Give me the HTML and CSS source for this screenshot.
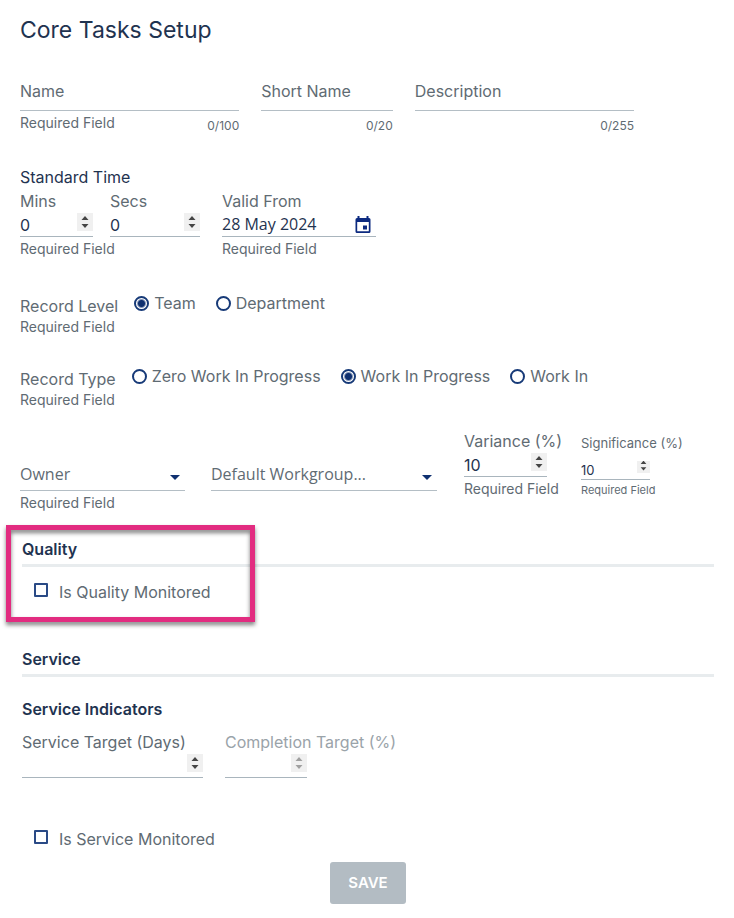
FILE: index.html
```
<!DOCTYPE html>
<html lang="en">
<head>
    <meta charset="UTF-8">
    <meta name="viewport" content="width=device-width, initial-scale=1.0">
    <title>Core Tasks Setup</title>
    <link rel="stylesheet" href="styles.css">
</head>
<body>

<form class="setup">
    <h1>Core Tasks Setup</h1>

    <div class="names">
        <div class="field">
            <input class="text" type="text" placeholder="Name" aria-label="Name" maxlength="100">
            <div class="hints"><span class="hint">Required Field</span><span class="count">0/100</span></div>
        </div>
        <div class="field">
            <input class="text" type="text" placeholder="Short Name" aria-label="Short Name" maxlength="20">
            <div class="hints"><span class="count">0/20</span></div>
        </div>
        <div class="field">
            <input class="text" type="text" placeholder="Description" aria-label="Description" maxlength="255">
            <div class="hints"><span class="count">0/255</span></div>
        </div>
    </div>

    <div class="times">
        <div>
            <h2>Standard Time</h2>
            <div class="pair">
                <div class="field mins">
                    <label for="mins">Mins</label>
                    <input id="mins" type="number" value="0">
                    <span class="hint">Required Field</span>
                </div>
                <div class="field secs">
                    <label for="secs">Secs</label>
                    <input id="secs" type="number" value="0">
                </div>
            </div>
        </div>
        <div class="field date">
            <label for="valid">Valid From</label>
            <div class="date-box">
                <input id="valid" type="text" value="28 May 2024">
                <button type="button" aria-label="Open calendar">
                    <svg width="16" height="18" viewBox="0 0 16 18">
                        <path fill="#0c2a80" fill-rule="evenodd" d="M2.500 0h2v2h7V0h2v2H14a1.500 1.500 0 0 1 1.500 1.500v12A1.500 1.500 0 0 1 14 17H2a1.500 1.500 0 0 1-1.500-1.500v-12A1.500 1.500 0 0 1 2 2h.5zM2.200 6v9.300h11.600V6zM8 9.500h4v4H8z"/>
                    </svg>
                </button>
            </div>
            <span class="hint">Required Field</span>
        </div>
    </div>

    <div class="choice level" role="radiogroup" aria-labelledby="level">
        <div>
            <div class="choice-name" id="level">Record Level</div>
            <span class="hint">Required Field</span>
        </div>
        <label class="option"><input type="radio" name="level" checked>Team</label>
        <label class="option"><input type="radio" name="level">Department</label>
    </div>

    <div class="choice type" role="radiogroup" aria-labelledby="type">
        <div>
            <div class="choice-name" id="type">Record Type</div>
            <span class="hint">Required Field</span>
        </div>
        <label class="option"><input type="radio" name="type">Zero Work In Progress</label>
        <label class="option"><input type="radio" name="type" checked>Work In Progress</label>
        <label class="option"><input type="radio" name="type">Work In</label>
    </div>

    <div class="owners">
        <div class="field owner">
            <select aria-label="Owner"><option>Owner</option></select>
            <span class="hint">Required Field</span>
        </div>
        <div class="field workgroup">
            <select aria-label="Default Workgroup"><option>Default Workgroup...</option></select>
        </div>
        <div class="field variance">
            <label for="variance">Variance (%)</label>
            <input id="variance" type="number" value="10">
            <span class="hint">Required Field</span>
        </div>
        <div class="field significance">
            <label for="significance">Significance (%)</label>
            <input id="significance" type="number" value="10">
            <span class="hint">Required Field</span>
        </div>
    </div>

    <section class="quality">
        <h3>Quality</h3>
        <label class="check"><input type="checkbox">Is Quality Monitored</label>
        <div class="highlight"></div>
    </section>

    <section class="service">
        <h3>Service</h3>
        <h4>Service Indicators</h4>
        <div class="targets">
            <div class="field days">
                <label for="days">Service Target (Days)</label>
                <input id="days" type="number">
            </div>
            <div class="field completion">
                <label for="completion">Completion Target (%)</label>
                <input id="completion" type="number" disabled>
            </div>
        </div>
        <label class="check">
            <input type="checkbox">Is Service Monitored
        </label>
        <button class="save" type="submit">SAVE</button>
    </section>
</form>

</body>
</html>
```
FILE: styles.css
```
* {
    box-sizing: border-box;
}

body {
    margin: 0;
    background: #fff;
    color: #5f6b73;
    font-family: Inter, sans-serif;
    font-size: 16px;
    line-height: 24px;
}

.setup {
    padding: 15px 20px;
}

h1, h2, h3, h4 {
    margin: 0;
    color: #1f3350;
    font-size: 16px;
    line-height: 24px;
}

h1 {
    font-size: 23px;
    font-weight: 400;
    line-height: 30px;
}

h2 {
    font-weight: 400;
}

h3, h4 {
    font-weight: 600;
}

input, select, button {
    font: inherit;
    color: inherit;
    padding: 0;
    border: 0;
    border-radius: 0;
    background: none;
}

.field label, .hint {
    display: block;
    white-space: nowrap;
}

.hint {
    padding-top: 3px;
    font-size: 14px;
    line-height: 18px;
}

.text {
    display: block;
    width: 100%;
    height: 38px;
    padding-bottom: 2px;
    border-bottom: 1px solid #b4bec5;
}

.text::placeholder {
    color: #5f6b73;
    opacity: 1;
}

.hints {
    display: flex;
    justify-content: space-between;
    align-items: flex-start;
}

.count {
    margin-left: auto;
    padding-top: 6px;
    font-size: 12px;
    line-height: 18px;
}

.names {
    display: grid;
    grid-template-columns: 5fr 3fr 5fr;
    gap: 22px;
    margin-top: 28px;
    padding-right: 80px;
}

input[type="number"] {
    display: block;
    width: 100%;
    height: 24px;
    border-bottom: 1px solid #a9b5bd;
    color: #1f3350;
}

input[type="number"]::-webkit-inner-spin-button {
    appearance: none;
    width: 16px;
    height: 18px;
    opacity: 1;
    background: #f0f0f0 url("data:image/svg+xml,%3Csvg xmlns='http://www.w3.org/2000/svg' viewBox='0 0 16 18'%3E%3Cpath fill='%23444' d='M4.500 7L8 3l3.500 4zM4.500 11h7L8 15z'/%3E%3C/svg%3E") center / contain no-repeat;
}

input[type="number"]:disabled::-webkit-inner-spin-button {
    background-image: url("data:image/svg+xml,%3Csvg xmlns='http://www.w3.org/2000/svg' viewBox='0 0 16 18'%3E%3Cpath fill='%23a0a0a0' d='M4.500 7L8 3l3.500 4zM4.500 11h7L8 15z'/%3E%3C/svg%3E");
}

.times {
    display: flex;
    align-items: flex-end;
    gap: 22px;
    margin-top: 30px;
}

.pair {
    display: flex;
    gap: 17px;
}

.mins {
    width: 73px;
}

.secs {
    width: 90px;
}

.date {
    width: 154px;
}

.date-box {
    display: flex;
    align-items: center;
    height: 24px;
    border-bottom: 1px solid #a9b5bd;
}

.date-box input {
    flex: 1;
    min-width: 0;
    padding-bottom: 2px;
    color: #1f3350;
    font-family: "Open Sans", sans-serif;
}

.date-box button {
    display: flex;
    margin-right: 5px;
}

.choice {
    display: flex;
    align-items: flex-start;
    gap: 20px;
}

.choice > div {
    margin-right: -4px;
}

.choice .hint {
    padding-top: 0;
}

.level {
    margin-top: 36px;
}

.type {
    margin-top: 31px;
}

.option {
    display: flex;
    align-items: center;
    gap: 5px;
    line-height: 18px;
    white-space: nowrap;
}

.option input {
    appearance: none;
    width: 15px;
    height: 15px;
    margin: 0;
    border: 2px solid #173a78;
    border-radius: 50%;
}

.option input:checked {
    background: radial-gradient(circle, #0f3070 3px, transparent 5px);
}

.owners {
    display: flex;
    align-items: flex-start;
    margin-top: 20px;
}

select {
    display: block;
    width: 100%;
    height: 32px;
    margin-top: 30px;
    padding-bottom: 1px;
    appearance: none;
    border-bottom: 1px solid #b4bec5;
    background: url("data:image/svg+xml,%3Csvg xmlns='http://www.w3.org/2000/svg' width='10' height='5'%3E%3Cpath fill='%230f3070' d='M0 0h10L5 5z'/%3E%3C/svg%3E") right 5px top 16px no-repeat;
    font-family: "Open Sans", sans-serif;
}

.owner {
    width: 165px;
    margin-right: 26px;
}

.workgroup {
    width: 226px;
    margin-right: 27px;
}

.variance {
    width: 83px;
    margin-right: 34px;
}

.significance {
    width: 69px;
    font-size: 13px;
}

.significance label {
    line-height: 28px;
}

.significance input[type="number"] {
    height: 19px;
    margin-top: 4px;
}

.significance input[type="number"]::-webkit-inner-spin-button {
    width: 13px;
    height: 15px;
}

.significance .hint {
    font-size: 11px;
    line-height: 14px;
}

section {
    padding-left: 2px;
}

h3 {
    padding-bottom: 3px;
    border-bottom: 3px solid #e8ecee;
}

.quality {
    position: relative;
    margin-top: 25px;
}

.check {
    display: flex;
    align-items: center;
    gap: 11px;
    margin-top: 13px;
    padding-left: 12px;
}

.check input {
    appearance: none;
    width: 14px;
    height: 14px;
    margin: 0 0 4px;
    border: 2px solid #2a4a86;
    border-radius: 1px;
}

/* callout frame laid over the quality section */
.highlight {
    position: absolute;
    top: -12px;
    left: -14px;
    width: 249px;
    height: 97px;
    border: 5px solid #e22c80;
    filter: drop-shadow(0 3px 2px rgba(0, 0, 0, 0.5));
    pointer-events: none;
}

.service {
    margin-top: 43px;
}

h4 {
    margin-top: 20px;
}

.targets {
    display: flex;
    gap: 22px;
    margin-top: 9px;
}

.days {
    width: 181px;
}

.completion {
    width: 82px;
    color: #9aa3a9;
}

.service .check {
    margin-top: 49px;
}

.save {
    display: block;
    height: 42px;
    margin: 11px auto 0;
    padding: 0 18px;
    border-radius: 3px;
    background: #b3bcc3;
    color: #fff;
    font-size: 15px;
    font-weight: 600;
}
```
